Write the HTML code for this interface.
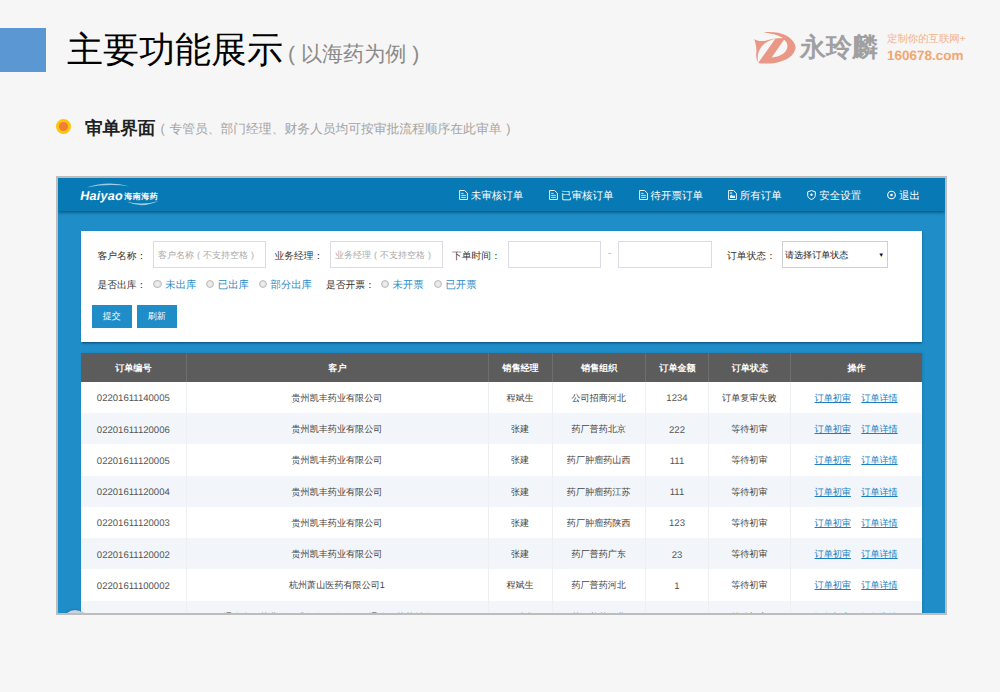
<!DOCTYPE html>
<html lang="en">
<head>
<meta charset="utf-8">
<title>slide</title>
<style>
*{box-sizing:border-box;margin:0;padding:0}
html,body{width:1000px;height:692px;overflow:hidden;background:#f6f6f6}
body{font-family:"Liberation Sans",sans-serif;position:relative;color:#333;text-rendering:geometricPrecision}
.abs{position:absolute;white-space:nowrap}
#sq{left:0;top:28px;width:46px;height:44px;background:#5b97d3}
#title{left:67px;top:24px;font-size:36px;line-height:52px;color:#000;font-weight:500}
#title2{left:288px;top:40px;font-size:21.1px;line-height:30px;color:#8a8a8a}
#bul{left:56px;top:119px;width:15px;height:15px;border-radius:50%;background:#ffc20e}
#bul i{position:absolute;left:3px;top:3px;width:9px;height:9px;border-radius:50%;background:#ee7f33}
#sub{left:85px;top:114.5px;font-size:17.6px;line-height:26px;font-weight:bold;color:#222}
.s2{top:119px;font-size:12.77px;line-height:20px;color:#a3a3a3}
#lgtxt{left:800px;top:28px;font-size:26px;line-height:38px;color:#a0a0a0;font-weight:bold}
#lg1{left:887px;top:32px;font-size:10.4px;line-height:16px;color:#f5b189}
#lg2{left:887px;top:47.3px;font-size:13.5px;line-height:18px;color:#f4a670;font-weight:bold}
#fb{left:56.2px;top:176.3px;width:890.5px;height:438.5px;background:#bdbdbd}
#frame{left:57.7px;top:177.8px;width:887.3px;height:435.2px;background:#1f8dc8;overflow:hidden}
#nav{left:0;top:0;width:100%;height:33px;background:#0779b4;box-shadow:0 1.5px 3px rgba(0,50,85,.65)}
.ni{top:10px;font-size:10.5px;line-height:16px;color:#fff;font-weight:500}
.ni svg{position:absolute;left:-12px;top:2.2px}
#panel{left:23.3px;top:53.2px;width:841.1px;height:111px;background:#fff;box-shadow:0 2.2px 2px -0.8px rgba(0,55,95,.75),1px 1px 2px rgba(0,55,95,.2)}
.lb{font-size:9.75px;line-height:14px;color:#333;font-weight:500}
.inp{border:1px solid #d9dbe7;background:#fff;font-size:9px;color:#aaa;line-height:26.4px;padding-left:4px}
.rd{width:8.4px;height:8.4px;border-radius:50%;border:1px solid #bdbdbd;background:radial-gradient(#f4f4f4,#d6d6d6)}
.rl{font-size:10.35px;line-height:14px;color:#2b8cc8;font-weight:500}
.btn{top:74.4px;height:22.4px;width:40.3px;background:#1f8dc8;color:#fff;font-size:9px;line-height:22px;text-align:center}
#tbl{left:23.3px;top:175.2px;width:841.1px;height:270px;background:#fff;box-shadow:1px 0 2px rgba(0,55,95,.2)}
#th{left:0;top:0;width:100%;height:29px;background:#5c5c5c}
.hc{top:0;height:29px;line-height:30.6px;font-size:9.1px;color:#fff;font-weight:bold;text-align:center;border-left:1px solid #6e6e6e}
.row{left:0;width:100%;height:31.22px}
.row.s{background:#f2f6fa}
.c{top:1px;height:31.22px;line-height:31.22px;font-size:9.1px;color:#444;text-align:center}
.c.n{font-size:9.55px;top:1.5px;color:#555}
.vl{top:29px;width:1px;height:260px;background:#edeff3}
.c a{color:#1e7fc0;text-decoration:underline}
</style>
</head>
<body>
<div id="sq" class="abs"></div>
<div id="title" class="abs">主要功能展示</div>
<div id="title2" class="abs">( 以海药为例 )</div>
<div id="bul" class="abs"><i></i></div>
<div id="sub" class="abs">审单界面</div>
<div class="abs s2" style="left:160.6px">(</div>
<div class="abs s2" style="left:169.5px">专管员、部门经理、财务人员均可按审批流程顺序在此审单</div>
<div class="abs s2" style="left:506.2px">)</div>

<svg class="abs" style="left:745px;top:25px" width="60" height="45" viewBox="0 0 923 692">
<path d="M140,215 C190,250 260,255 330,238 C400,215 480,200 585,200 C560,180 480,150 420,138 C370,128 320,120 290,112 C400,100 540,110 640,165 C740,225 790,300 775,370 C755,470 640,550 480,580 C380,598 280,595 215,590 C180,555 165,490 175,420 C180,340 160,270 140,215Z" fill="#ea9886"/>
<path d="M468,213 C330,238 215,335 198,465 C192,515 196,550 205,580Z" fill="#f6f6f6"/>
<path d="M600,228 C640,250 660,300 650,350 C630,430 540,490 410,500Z" fill="#f6f6f6"/>
</svg>
<div id="lgtxt" class="abs">永玲麟</div>
<div id="lg1" class="abs">定制你的互联网+</div>
<div id="lg2" class="abs">160678.com</div>

<div id="fb" class="abs"></div>
<div id="frame" class="abs">
<div id="nav" class="abs">
<div class="abs ni" style="left:413.0px"><svg width="10" height="10" viewBox="0 0 10 10"><path d="M0.6 0.5H5.6L8.4 3.2V9.5H0.6Z" fill="none" stroke="#fff" stroke-width="1" stroke-opacity=".92"/><path d="M2.2 3.4H4.6M2.2 5.4H6.8M2.2 7.4H6.8" stroke="#fff" stroke-width="0.9" stroke-opacity=".9"/></svg>未审核订单</div>
<div class="abs ni" style="left:503.2px"><svg width="10" height="10" viewBox="0 0 10 10"><path d="M0.6 0.5H5.6L8.4 3.2V9.5H0.6Z" fill="none" stroke="#fff" stroke-width="1" stroke-opacity=".92"/><path d="M2.2 3.4H4.6M2.2 5.4H6.8M2.2 7.4H6.8" stroke="#fff" stroke-width="0.9" stroke-opacity=".9"/></svg>已审核订单</div>
<div class="abs ni" style="left:592.9px"><svg width="10" height="10" viewBox="0 0 10 10"><path d="M0.6 0.5H5.6L8.4 3.2V9.5H0.6Z" fill="none" stroke="#fff" stroke-width="1" stroke-opacity=".92"/><path d="M2.2 3.4H4.6M2.2 5.4H6.8M2.2 7.4H6.8" stroke="#fff" stroke-width="0.9" stroke-opacity=".9"/></svg>待开票订单</div>
<div class="abs ni" style="left:682.0px"><svg width="10" height="10" viewBox="0 0 10 10"><path d="M0.6 0.5H5.6L8.4 3.2V9.5H0.6Z" fill="none" stroke="#fff" stroke-width="1" stroke-opacity=".92"/><path d="M2 8V5.8L3.5 4.6L5 6L6 5.2L7 6.2V8Z" fill="#fff" fill-opacity=".9"/><rect x="2" y="2.4" width="2.2" height="1.2" fill="#fff" fill-opacity=".85"/></svg>所有订单</div>
<div class="abs ni" style="left:761.6px"><svg width="9" height="10" viewBox="0 0 9 10"><path d="M4.5 0.6L8.3 1.8V5.2C8.3 7.4 6.5 8.8 4.5 9.5C2.5 8.8 0.7 7.4 0.7 5.2V1.8Z" fill="none" stroke="#fff" stroke-width="1"/><circle cx="4.5" cy="4.8" r="1.2" fill="#fff"/></svg>安全设置</div>
<div class="abs ni" style="left:841.3px"><svg width="9" height="10" viewBox="0 0 9 10"><circle cx="4.5" cy="5" r="3.8" fill="none" stroke="#fff" stroke-width="1.1"/><circle cx="4.5" cy="5" r="1.3" fill="#fff"/></svg>退出</div>
<div class="abs" style="left:22.6px;top:9.8px;font-size:12.6px;line-height:16px;font-weight:bold;font-style:italic;color:#fff;letter-spacing:0.2px">Haiyao</div>
<div class="abs" style="left:66.6px;top:13.9px;font-size:8px;letter-spacing:0.5px;line-height:10px;font-weight:bold;color:#fff">海南海药</div>
<svg class="abs" style="left:22.3px;top:2.2px" width="80" height="30" viewBox="0 0 80 30"><path d="M6.5,7.4 Q28,0 50,6.4 Q28,3.4 6.5,7.4Z" fill="#fff" fill-opacity=".62"/><path d="M46,21.6 Q62,29 78.5,21 Q62,25.8 46,21.6Z" fill="#fff" fill-opacity=".62"/></svg>
</div>
<div id="panel" class="abs">
<div class="abs lb" style="left:16.5px;top:18.6px">客户名称：</div>
<div class="abs inp" style="left:72px;top:10.1px;width:113.1px;height:26.9px">客户名称<span style="display:inline-block;width:9px;text-align:center">(</span>不支持空格<span style="display:inline-block;width:9px;text-align:center">)</span></div>
<div class="abs lb" style="left:193.5px;top:18.6px">业务经理：</div>
<div class="abs inp" style="left:249px;top:10.1px;width:113.1px;height:26.9px">业务经理<span style="display:inline-block;width:9px;text-align:center">(</span>不支持空格<span style="display:inline-block;width:9px;text-align:center">)</span></div>
<div class="abs lb" style="left:371px;top:18.6px">下单时间：</div>
<div class="abs inp" style="left:427px;top:10px;width:93.5px;height:27px"></div>
<div class="abs lb" style="left:527px;top:16.5px;color:#b0b0b0">-</div>
<div class="abs inp" style="left:537px;top:10px;width:94.5px;height:27px"></div>
<div class="abs lb" style="left:646px;top:18.6px">订单状态：</div>
<div class="abs inp" style="left:700.6px;top:10.3px;width:106.6px;height:26.4px;border-color:#cfcfd4;color:#222;font-size:9.07px;line-height:26.4px;padding-left:2.4px">请选择订单状态<span style="position:absolute;right:3px;top:0.6px;font-size:6px;color:#111">&#9660;</span></div>
<div class="abs lb" style="left:16.5px;top:48px">是否出库：</div>
<div class="abs rd" style="left:72.2px;top:48.9px"></div>
<div class="abs rl" style="left:84.3px;top:48.2px">未出库</div>
<div class="abs rd" style="left:124.8px;top:48.9px"></div>
<div class="abs rl" style="left:136.8px;top:48.2px">已出库</div>
<div class="abs rd" style="left:177.6px;top:48.9px"></div>
<div class="abs rl" style="left:189.6px;top:48.2px">部分出库</div>
<div class="abs lb" style="left:245px;top:48px">是否开票：</div>
<div class="abs rd" style="left:300.0px;top:48.9px"></div>
<div class="abs rl" style="left:311.5px;top:48.2px">未开票</div>
<div class="abs rd" style="left:352.9px;top:48.9px"></div>
<div class="abs rl" style="left:364.5px;top:48.2px">已开票</div>
<div class="abs btn" style="left:10.7px">提交</div>
<div class="abs btn" style="left:55.7px">刷新</div>
</div>
<div id="tbl" class="abs"><div id="th" class="abs"><div class="abs hc" style="left:0px;width:104.7px;border-left:0;">订单编号</div><div class="abs hc" style="left:104.7px;width:302.5px;">客户</div><div class="abs hc" style="left:407.2px;width:63.7px;">销售经理</div><div class="abs hc" style="left:470.9px;width:93.6px;">销售组织</div><div class="abs hc" style="left:564.5px;width:63.0px;">订单金额</div><div class="abs hc" style="left:627.5px;width:81.7px;">订单状态</div><div class="abs hc" style="left:709.2px;width:131.9px;">操作</div></div>
<div class="abs row" style="top:29.0px"><div class="abs c n" style="left:0px;width:104.7px">02201611140005</div><div class="abs c" style="left:104.7px;width:302.5px">贵州凯丰药业有限公司</div><div class="abs c" style="left:407.2px;width:63.7px">程斌生</div><div class="abs c" style="left:470.9px;width:93.6px">公司招商河北</div><div class="abs c n" style="left:564.5px;width:63.0px">1234</div><div class="abs c" style="left:627.5px;width:81.7px">订单复审失败</div><div class="abs c" style="left:709.2px;width:131.9px"><a>订单初审</a><span style="display:inline-block;width:10.4px"></span><a>订单详情</a></div></div>
<div class="abs row s" style="top:60.22px"><div class="abs c n" style="left:0px;width:104.7px">02201611120006</div><div class="abs c" style="left:104.7px;width:302.5px">贵州凯丰药业有限公司</div><div class="abs c" style="left:407.2px;width:63.7px">张建</div><div class="abs c" style="left:470.9px;width:93.6px">药厂普药北京</div><div class="abs c n" style="left:564.5px;width:63.0px">222</div><div class="abs c" style="left:627.5px;width:81.7px">等待初审</div><div class="abs c" style="left:709.2px;width:131.9px"><a>订单初审</a><span style="display:inline-block;width:10.4px"></span><a>订单详情</a></div></div>
<div class="abs row" style="top:91.44px"><div class="abs c n" style="left:0px;width:104.7px">02201611120005</div><div class="abs c" style="left:104.7px;width:302.5px">贵州凯丰药业有限公司</div><div class="abs c" style="left:407.2px;width:63.7px">张建</div><div class="abs c" style="left:470.9px;width:93.6px">药厂肿瘤药山西</div><div class="abs c n" style="left:564.5px;width:63.0px">111</div><div class="abs c" style="left:627.5px;width:81.7px">等待初审</div><div class="abs c" style="left:709.2px;width:131.9px"><a>订单初审</a><span style="display:inline-block;width:10.4px"></span><a>订单详情</a></div></div>
<div class="abs row s" style="top:122.66px"><div class="abs c n" style="left:0px;width:104.7px">02201611120004</div><div class="abs c" style="left:104.7px;width:302.5px">贵州凯丰药业有限公司</div><div class="abs c" style="left:407.2px;width:63.7px">张建</div><div class="abs c" style="left:470.9px;width:93.6px">药厂肿瘤药江苏</div><div class="abs c n" style="left:564.5px;width:63.0px">111</div><div class="abs c" style="left:627.5px;width:81.7px">等待初审</div><div class="abs c" style="left:709.2px;width:131.9px"><a>订单初审</a><span style="display:inline-block;width:10.4px"></span><a>订单详情</a></div></div>
<div class="abs row" style="top:153.88px"><div class="abs c n" style="left:0px;width:104.7px">02201611120003</div><div class="abs c" style="left:104.7px;width:302.5px">贵州凯丰药业有限公司</div><div class="abs c" style="left:407.2px;width:63.7px">张建</div><div class="abs c" style="left:470.9px;width:93.6px">药厂肿瘤药陕西</div><div class="abs c n" style="left:564.5px;width:63.0px">123</div><div class="abs c" style="left:627.5px;width:81.7px">等待初审</div><div class="abs c" style="left:709.2px;width:131.9px"><a>订单初审</a><span style="display:inline-block;width:10.4px"></span><a>订单详情</a></div></div>
<div class="abs row s" style="top:185.1px"><div class="abs c n" style="left:0px;width:104.7px">02201611120002</div><div class="abs c" style="left:104.7px;width:302.5px">贵州凯丰药业有限公司</div><div class="abs c" style="left:407.2px;width:63.7px">张建</div><div class="abs c" style="left:470.9px;width:93.6px">药厂普药广东</div><div class="abs c n" style="left:564.5px;width:63.0px">23</div><div class="abs c" style="left:627.5px;width:81.7px">等待初审</div><div class="abs c" style="left:709.2px;width:131.9px"><a>订单初审</a><span style="display:inline-block;width:10.4px"></span><a>订单详情</a></div></div>
<div class="abs row" style="top:216.32px"><div class="abs c n" style="left:0px;width:104.7px">02201611100002</div><div class="abs c" style="left:104.7px;width:302.5px">杭州萧山医药有限公司1</div><div class="abs c" style="left:407.2px;width:63.7px">程斌生</div><div class="abs c" style="left:470.9px;width:93.6px">药厂普药河北</div><div class="abs c n" style="left:564.5px;width:63.0px">1</div><div class="abs c" style="left:627.5px;width:81.7px">等待初审</div><div class="abs c" style="left:709.2px;width:131.9px"><a>订单初审</a><span style="display:inline-block;width:10.4px"></span><a>订单详情</a></div></div>
<div class="abs row s" style="top:247.54px"><div class="abs c n" style="left:0px;width:104.7px">02201611090001</div><div class="abs c" style="left:104.7px;width:302.5px">通化金马药业集团股份有限公司（原通化医药药材公司）</div><div class="abs c" style="left:407.2px;width:63.7px">程斌生</div><div class="abs c" style="left:470.9px;width:93.6px">药厂普药河北</div><div class="abs c n" style="left:564.5px;width:63.0px">1</div><div class="abs c" style="left:627.5px;width:81.7px">等待初审</div><div class="abs c" style="left:709.2px;width:131.9px"><a>订单初审</a><span style="display:inline-block;width:10.4px"></span><a>订单详情</a></div></div>
<div class="abs vl" style="left:104.7px"></div><div class="abs vl" style="left:407.2px"></div><div class="abs vl" style="left:470.9px"></div><div class="abs vl" style="left:564.5px"></div><div class="abs vl" style="left:627.5px"></div><div class="abs vl" style="left:709.2px"></div>
</div>
<div class="abs" style="left:5.5px;top:432.7px;width:24px;height:24px;border-radius:50%;background:#c8d4e0;box-shadow:0 0 2px rgba(0,50,90,.5)"></div>
</div>
</body>
</html>
